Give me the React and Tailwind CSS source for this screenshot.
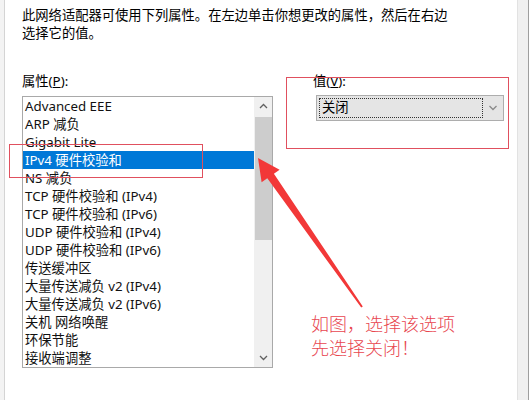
import React from "react";

const properties = [
  "Advanced EEE",
  "ARP 减负",
  "Gigabit Lite",
  "IPv4 硬件校验和",
  "NS 减负",
  "TCP 硬件校验和 (IPv4)",
  "TCP 硬件校验和 (IPv6)",
  "UDP 硬件校验和 (IPv4)",
  "UDP 硬件校验和 (IPv6)",
  "传送缓冲区",
  "大量传送减负 v2 (IPv4)",
  "大量传送减负 v2 (IPv6)",
  "关机 网络唤醒",
  "环保节能",
  "接收端调整",
];

const selected = 3;

function Chevron({ up = false, className = "" }) {
  return (
    <svg width="9" height="6" viewBox="0 0 9 6" className={className}>
      <path
        d={up ? "M1 5 L4.5 1.5 L8 5" : "M1 1 L4.5 4.5 L8 1"}
        fill="none"
        stroke="currentColor"
        strokeWidth="1.3"
      />
    </svg>
  );
}

// Property list with the classic Win10 scrollbar on the right
function PropertyList() {
  return (
    <div className="mt-[6px] w-[251px] h-[272px] border border-[#a9a9a9] bg-white flex">
      <ul className="w-[231px] flex flex-col">
        {properties.map((name, i) => (
          <li
            key={name}
            className={`h-[18px] leading-[18px] pl-[2px] whitespace-nowrap ${
              i === selected ? "bg-[#0078d7] text-white" : "text-[#111]"
            }`}
          >
            {name}
          </li>
        ))}
      </ul>
      <div className="w-[18px] ml-auto bg-[#f0f0f0] flex flex-col items-center">
        <div className="h-[18px] flex items-center justify-center text-[#606060]">
          <Chevron up />
        </div>
        <div className="mt-[2px] w-[17px] h-[123px] bg-[#cdcdcd]" />
        <div className="mt-auto h-[18px] flex items-center justify-center text-[#606060]">
          <Chevron />
        </div>
      </div>
    </div>
  );
}

function ValueSelect() {
  return (
    <div className="mt-[5px] ml-[3px] w-[188px] h-[26px] border border-[#adadad] bg-[#e5e5e5] flex items-center">
      <div className="ml-[2px] w-[164px] h-[20px] border border-dotted border-[#333] flex items-center pl-[2px] leading-none">
        关闭
      </div>
      <div className="ml-auto mr-[5px] text-[#8a8a8a]">
        <Chevron className="w-[10px]" />
      </div>
    </div>
  );
}

export default function App() {
  return (
    <div
      className="relative w-[529px] h-[400px] overflow-hidden bg-[#f0f0f0] flex text-[13.3px] text-black"
      style={{ fontFamily: '"Noto Sans", "Noto Sans CJK SC", sans-serif' }}
    >
      <div className="w-[4px] bg-[#f3f3f3]" />
      <div className="w-[514px] h-full bg-white border-l border-r border-l-[#d4d4d4] border-r-[#e2e2e2] pl-[17px] pt-[6px]">
        <p className="leading-[18px]">
          此网络适配器可使用下列属性。在左边单击你想更改的属性，然后在右边
          <br />
          选择它的值。
        </p>

        <div className="mt-[30px] flex">
          <div className="w-[251px]">
            <div className="h-[18px] leading-[18px]">
              属性(<span className="underline">P</span>):
            </div>
            <PropertyList />
          </div>

          <div className="ml-[40px]">
            <div className="h-[18px] leading-[18px]">
              值(<span className="underline">V</span>):
            </div>
            <ValueSelect />
          </div>
        </div>
      </div>
      <div className="w-[11px] h-full bg-[#f0f0f0] border-r border-[#9e9e9e]" />

      {/* red markup drawn over the dialog */}
      <div className="absolute left-[9px] top-[144px] w-[194px] h-[34px] border border-[#e0505e]" />
      <div className="absolute left-[286px] top-[77px] w-[223px] h-[72px] border border-[#e0505e]" />

      <svg className="absolute left-0 top-0" width="529" height="400" viewBox="0 0 529 400">
        <polygon
          points="258,158 279.6,169.7 273.9,173.7 362.8,306.4 361.2,307.6 267.3,178.3 261.6,182.3"
          fill="#f23838"
        />
      </svg>

      <div
        className="absolute left-[311px] top-[311px] text-[18px] leading-[24px] text-[#e8464f] font-light"
        style={{ fontFamily: '"Noto Sans CJK SC", sans-serif' }}
      >
        如图，选择该选项
        <br />
        先选择关闭！
      </div>
    </div>
  );
}
